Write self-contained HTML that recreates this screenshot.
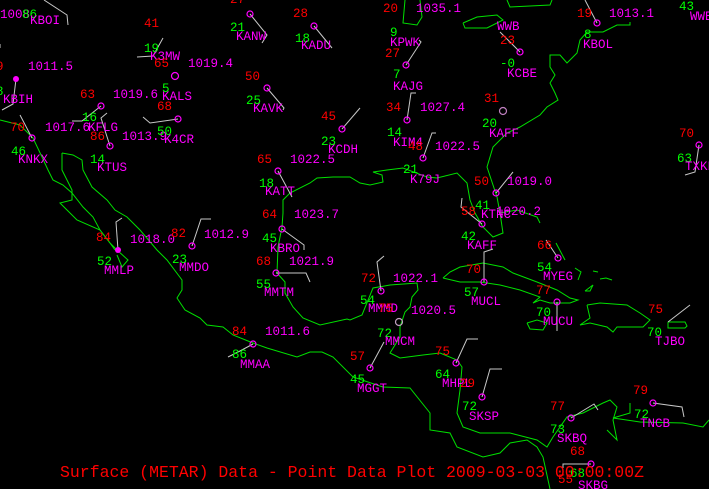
<!DOCTYPE html>
<html><head><meta charset="utf-8"><style>
html,body{margin:0;padding:0;background:#000;width:709px;height:489px;overflow:hidden}
svg{display:block}
text{font-family:"Liberation Mono",monospace;font-size:12.5px}
.m{fill:#ff00ff}.r{fill:#ff0000}.g{fill:#00ff00}
.c{fill:none;stroke:#00e000;stroke-width:1}
.b{fill:none;stroke:#c8c8c8;stroke-width:1}
.s{fill:none;stroke:#ff00ff;stroke-width:1.2}
</style></head><body>
<svg width="709" height="489" viewBox="0 0 709 489" xmlns="http://www.w3.org/2000/svg">
<!-- coastlines -->
<polyline class="c" points="0,120 20,125 33,138 42,157 48,170 53,180 63,185 72,193 83,207 93,217 100,230 110,243 117,250 128,260 122,267 117,255"/>
<polyline class="c" points="62,153 62,170 67,180 72,190 72,200 60,203 67,210 77,220 100,230 110,243 115,250"/>
<polyline class="c" points="62,153 73,155 82,160 83,170 92,187 107,200 115,210 127,217 140,230 157,250 167,260 182,280 182,290 177,298 185,310 200,318 207,325 223,327 233,335 253,343 267,348 297,357 310,352 322,352 333,357 353,377 383,387 410,388 430,413 430,430 450,433 457,447 483,457 500,453 510,443 527,440 537,447 543,457 550,489"/>
<polyline class="c" points="278,247 282,227 283,213 283,200 290,193 310,183 317,178 333,177 350,177 360,183 370,185 383,182 382,175 373,172 387,170 403,168 427,177 437,178 457,173 467,183 470,200 475,213 483,227 493,237 503,233 500,213 497,197 487,167 493,147 507,133 520,127 540,115 547,107 558,100 555,93 550,83 555,75 550,67 550,55 560,55 567,63 577,53 580,40 587,32 603,32 617,25 630,25 630,22"/>
<polyline class="c" points="500,213 517,210 537,217 540,223"/>
<polyline class="c" points="278,247 277,273 285,282 285,293 293,307 303,318 320,325 347,319 350,320 362,315 373,288 390,285 417,283 418,290 412,297 410,307 405,312 400,327 400,337 390,353 400,358 423,355 440,353 457,360 462,367 460,390 457,413 463,427 480,433 510,433 537,440 547,447 553,437 567,417 583,413 603,403 610,400 617,407 613,420 617,440 607,430"/>
<polyline class="c" points="630,403 630,413 613,418 640,422 683,423 703,427 709,420"/>
<polyline class="c" points="405,0 403,23 417,25 422,17 420,0"/>
<polyline class="c" points="463,23 477,17 497,15 503,20 487,28 465,28 463,23"/>
<polyline class="c" points="507,0 510,7 550,5 552,0"/>
<polyline class="c" points="443,278 450,272 460,267 483,263 503,267 513,273 537,282 557,290 570,298 578,300 570,303 550,303 540,300 533,303 540,297 520,290 500,285 480,282 460,282 443,278"/>
<polyline class="c" points="587,305 600,303 627,305 640,313 650,320 643,327 617,327 613,332 607,327 590,323 580,325 590,318 587,305"/>
<polyline class="c" points="527,323 537,320 547,323 543,330 530,329 527,323"/>
<polyline class="c" points="668,322 685,322 687,326 685,328 668,328 668,322"/>
<polyline class="c" points="556,243 565,260"/><polyline class="c" points="575,268 581,272 578,280"/><polyline class="c" points="593,271 598,272"/><polyline class="c" points="600,279 606,278 612,280"/><polyline class="c" points="585,291 593,285 590,291 585,291"/>
<!-- barbs -->
<polyline class="b" points="44,0 67,15 68,25"/><polyline class="b" points="250,14 267,35 262,43"/><polyline class="b" points="314,26 332,48"/><polyline class="b" points="163,38 153,56 137,57"/>
<polyline class="b" points="267,88 284,108 283,110"/><polyline class="b" points="342,129 360,108"/><polyline class="b" points="16,79 13,104 2,110"/><polyline class="b" points="101,106 82,121 72,121"/>
<polyline class="b" points="178,119 150,123 143,117"/><polyline class="b" points="110,146 101,118 107,113"/><polyline class="b" points="32,138 20,115"/><polyline class="b" points="278,171 292,197"/>
<polyline class="b" points="282,229 304,245 304,250"/><polyline class="b" points="192,246 201,219 211,219"/><polyline class="b" points="118,250 116,222 122,218"/><polyline class="b" points="276,273 306,273 310,282"/>
<polyline class="b" points="253,344 240,351 228,357"/><polyline class="b" points="406,65 421,42 419,40"/><polyline class="b" points="407,120 411,93 416,93"/><polyline class="b" points="423,158 432,133 436,133"/>
<polyline class="b" points="520,52 500,32"/><polyline class="b" points="597,23 585,0"/><polyline class="b" points="699,145 695,172 685,175"/><polyline class="b" points="496,193 513,172"/>
<polyline class="b" points="482,224 461,207 462,198"/><polyline class="b" points="484,282 484,252 493,249"/><polyline class="b" points="557,302 557,331"/><polyline class="b" points="558,258 546,240"/>
<polyline class="b" points="381,291 377,262 384,256"/><polyline class="b" points="370,368 384,342"/><polyline class="b" points="456,363 467,339 478,339"/><polyline class="b" points="482,397 490,369 502,369"/>
<polyline class="b" points="571,418 594,404 598,410"/><polyline class="b" points="653,403 682,407 684,417"/><polyline class="b" points="591,464 563,464 563,468"/><polyline class="b" points="668,322 690,305"/><polyline class="b" points="0,48 0,44"/>
<!-- stations -->
<g class="s"><circle cx="250" cy="14" r="3"/><circle cx="314" cy="26" r="3"/><circle cx="267" cy="88" r="3"/><circle cx="342" cy="129" r="3"/><circle cx="278" cy="171" r="3"/><circle cx="282" cy="229" r="3"/><circle cx="192" cy="246" r="3"/><circle cx="276" cy="273" r="3"/><circle cx="253" cy="344" r="3"/><circle cx="101" cy="106" r="3"/><circle cx="178" cy="119" r="3"/><circle cx="110" cy="146" r="3"/><circle cx="32" cy="138" r="3"/><circle cx="175" cy="76" r="3.5"/><circle cx="406" cy="65" r="3"/><circle cx="407" cy="120" r="3"/><circle cx="423" cy="158" r="3"/><circle cx="520" cy="52" r="3"/><circle cx="597" cy="23" r="3"/><circle cx="699" cy="145" r="3"/><circle cx="496" cy="193" r="3"/><circle cx="482" cy="224" r="3"/><circle cx="484" cy="282" r="3"/><circle cx="557" cy="302" r="3"/><circle cx="558" cy="258" r="3"/><circle cx="381" cy="291" r="3"/><circle cx="370" cy="368" r="3"/><circle cx="456" cy="363" r="3"/><circle cx="482" cy="397" r="3"/><circle cx="571" cy="418" r="3"/><circle cx="653" cy="403" r="3"/><circle cx="591" cy="464" r="3"/><circle cx="503" cy="111" r="3.5" stroke="#c080c0"/><circle cx="399" cy="322" r="3.5" stroke="#c0a0c0"/></g>
<circle cx="16" cy="79" r="3" fill="#ff00ff"/><circle cx="118" cy="250" r="3" fill="#ff00ff"/>
<!-- text -->
<g>
<text class="m" x="0" y="18">1008</text><text class="g" x="22" y="18">86</text><text class="m" x="30" y="24">KBOI</text>
<text class="r" x="144" y="27">41</text><text class="g" x="144" y="52">19</text><text class="m" x="150" y="60">K3MW</text><text class="r" x="154" y="67">65</text><text class="m" x="188" y="67">1019.4</text>
<text class="m" x="28" y="70">1011.5</text><text class="r" x="-4" y="70">9</text>
<text class="g" x="162" y="92">5</text><text class="m" x="162" y="100">KALS</text><text class="r" x="157" y="110">68</text>
<text class="g" x="-4" y="95">8</text><text class="m" x="3" y="103">KBIH</text>
<text class="r" x="80" y="98">63</text><text class="m" x="113" y="98">1019.6</text>
<text class="g" x="82" y="121">16</text><text class="m" x="45" y="131">1017.6</text><text class="m" x="88" y="131">KFLG</text><text class="r" x="10" y="131">70</text>
<text class="r" x="90" y="140">86</text><text class="m" x="122" y="140">1013.9</text><text class="g" x="157" y="135">50</text><text class="m" x="164" y="143">K4CR</text>
<text class="g" x="11" y="155">46</text><text class="m" x="18" y="163">KNKX</text><text class="g" x="90" y="163">14</text><text class="m" x="97" y="171">KTUS</text>
<text class="r" x="230" y="3">27</text><text class="g" x="230" y="31">21</text><text class="m" x="236" y="40">KANW</text>
<text class="r" x="293" y="17">28</text><text class="g" x="295" y="42">18</text><text class="m" x="301" y="49">KADU</text>
<text class="r" x="245" y="80">50</text><text class="g" x="246" y="104">25</text><text class="m" x="253" y="112">KAVK</text>
<text class="r" x="321" y="120">45</text><text class="g" x="321" y="145">23</text><text class="m" x="328" y="153">KCDH</text>
<text class="r" x="257" y="163">65</text><text class="m" x="290" y="163">1022.5</text><text class="g" x="259" y="187">18</text><text class="m" x="265" y="195">KATT</text>
<text class="r" x="262" y="218">64</text><text class="m" x="294" y="218">1023.7</text><text class="g" x="262" y="242">45</text><text class="m" x="270" y="252">KBRO</text>
<text class="r" x="96" y="241">84</text><text class="m" x="130" y="243">1018.0</text><text class="r" x="171" y="237">82</text><text class="m" x="204" y="238">1012.9</text>
<text class="g" x="97" y="265">52</text><text class="m" x="104" y="274">MMLP</text><text class="g" x="172" y="263">23</text><text class="m" x="179" y="271">MMDO</text>
<text class="r" x="256" y="265">68</text><text class="m" x="289" y="265">1021.9</text><text class="g" x="256" y="288">55</text><text class="m" x="264" y="296">MMTM</text>
<text class="r" x="232" y="335">84</text><text class="m" x="265" y="335">1011.6</text><text class="g" x="232" y="358">86</text><text class="m" x="240" y="368">MMAA</text>
<text class="r" x="383" y="12">20</text><text class="m" x="416" y="12">1035.1</text>
<text class="g" x="390" y="36">9</text><text class="m" x="390" y="46">KPWK</text><text class="r" x="385" y="57">27</text><text class="g" x="393" y="78">7</text><text class="m" x="393" y="90">KAJG</text>
<text class="r" x="386" y="111">34</text><text class="m" x="420" y="111">1027.4</text><text class="g" x="387" y="136">14</text><text class="m" x="393" y="146">KIM4</text><text class="r" x="408" y="150">48</text><text class="m" x="435" y="150">1022.5</text>
<text class="m" x="497" y="30">WWB</text><text class="r" x="500" y="44">23</text><text class="g" x="500" y="67">-0</text><text class="m" x="507" y="77">KCBE</text>
<text class="r" x="484" y="102">31</text><text class="g" x="482" y="127">20</text><text class="m" x="489" y="137">KAFF</text>
<text class="r" x="577" y="17">19</text><text class="m" x="609" y="17">1013.1</text><text class="g" x="584" y="38">8</text><text class="m" x="583" y="48">KBOL</text>
<text class="g" x="679" y="10">43</text><text class="m" x="690" y="20">WWE</text>
<text class="r" x="679" y="137">70</text><text class="g" x="677" y="162">63</text><text class="m" x="685" y="170">TXKF</text>
<text class="g" x="403" y="173">21</text><text class="m" x="410" y="183">K79J</text>
<text class="r" x="474" y="185">50</text><text class="m" x="507" y="185">1019.0</text>
<text class="g" x="475" y="209">41</text><text class="r" x="461" y="215">58</text><text class="m" x="481" y="218">KTNC</text><text class="m" x="496" y="215">1020.2</text>
<text class="g" x="461" y="240">42</text><text class="m" x="467" y="249">KAFF</text><text class="r" x="537" y="249">66</text>
<text class="g" x="537" y="271">54</text><text class="m" x="543" y="280">MYEG</text>
<text class="r" x="466" y="273">70</text><text class="g" x="464" y="296">57</text><text class="m" x="471" y="305">MUCL</text>
<text class="r" x="536" y="294">77</text><text class="g" x="536" y="316">70</text><text class="m" x="543" y="325">MUCU</text>
<text class="r" x="648" y="313">75</text><text class="g" x="647" y="336">70</text><text class="m" x="655" y="345">TJBO</text>
<text class="r" x="361" y="282">72</text><text class="m" x="393" y="282">1022.1</text><text class="g" x="360" y="304">54</text><text class="m" x="368" y="312">MMMD</text><text class="r" x="378" y="312">75</text><text class="m" x="411" y="314">1020.5</text>
<text class="g" x="377" y="337">72</text><text class="m" x="385" y="345">MMCM</text>
<text class="r" x="350" y="360">57</text><text class="g" x="350" y="383">45</text><text class="m" x="357" y="392">MGGT</text>
<text class="r" x="435" y="355">75</text><text class="g" x="435" y="378">64</text><text class="m" x="442" y="387">MHPL</text><text class="r" x="460" y="387">29</text>
<text class="g" x="462" y="410">72</text><text class="m" x="469" y="420">SKSP</text>
<text class="r" x="633" y="394">79</text><text class="g" x="634" y="418">72</text><text class="m" x="640" y="427">TNCB</text>
<text class="r" x="550" y="410">77</text><text class="g" x="550" y="433">73</text><text class="m" x="557" y="442">SKBQ</text><text class="r" x="570" y="455">68</text>
<text class="r" x="558" y="483">55</text><text class="g" x="570" y="477">68</text><text class="m" x="578" y="489">SKBG</text>
<text class="r" x="60" y="477" style="font-size:16.5px" textLength="584" lengthAdjust="spacing">Surface (METAR) Data - Point Data Plot 2009-03-03 00:00:00Z</text>
</g>
</svg>
</body></html>
